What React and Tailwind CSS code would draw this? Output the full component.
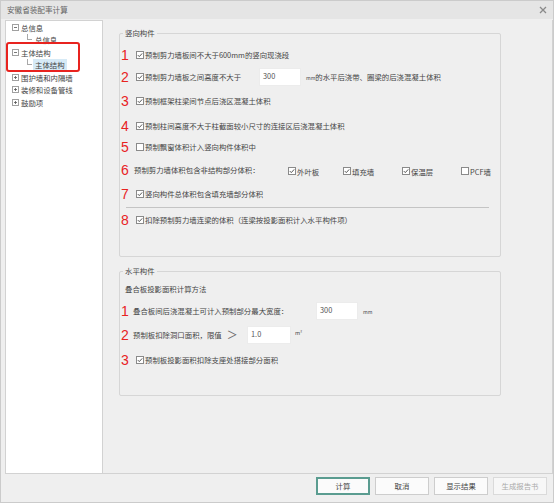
import React from 'react'

const FONT = { fontFamily: '"Noto Sans CJK SC", "Noto Sans", sans-serif' }

function Check({ on = true }) {
  return (
    <svg width="8" height="8" viewBox="0 0 8 8" className="shrink-0">
      <rect x="0.5" y="0.5" width="7" height="7" fill="#fff" stroke="#8a8a8a" />
      {on && <path d="M1.8 4.1 L3.3 5.6 L6.2 2.4" fill="none" stroke="#444" strokeWidth="0.9" />}
    </svg>
  )
}

function Num({ n, w = 'w-[16px]' }) {
  return (
    <span className={`${w} shrink-0 pl-[1px] text-[14px] leading-none text-[#e8231f]`} style={{ fontFamily: '"Liberation Sans", sans-serif' }}>
      {n}
    </span>
  )
}

function Expander({ open }) {
  return (
    <svg width="7" height="7" viewBox="0 0 7 7" className="shrink-0">
      <rect x="0.5" y="0.5" width="6" height="6" fill="#fff" stroke="#a0a0a0" />
      <path d="M2 3.5 H5" stroke="#555" strokeWidth="0.8" />
      {!open && <path d="M3.5 2 V5" stroke="#555" strokeWidth="0.8" />}
    </svg>
  )
}

function TreeParent({ label, open }) {
  return (
    <div className="h-[12.5px] flex items-center pl-[6px] gap-[2px]">
      <Expander open={open} />
      <span>{label}</span>
    </div>
  )
}

function TreeChild({ label, selected }) {
  return (
    <div className="h-[12.5px] flex items-start pl-[21px]">
      <span className="w-[5px] h-[6.5px] border-l border-b border-[#a8a8a8] shrink-0" />
      <span className={`ml-[1px] h-[12px] px-[2px] flex items-center ${selected ? 'bg-[#d6eaf6]' : ''}`}>{label}</span>
    </div>
  )
}

function Group({ title, h, children, className = '' }) {
  return (
    <div className={`relative w-[382px] ${h} border border-[#d6d6d6] rounded-[2px] ${className}`}>
      <span className="absolute -top-[6px] left-[3px] px-[2px] bg-[#efefef] leading-[10px]">{title}</span>
      {children}
    </div>
  )
}

function Field({ value, w }) {
  return (
    <div className={`${w} h-[18px] bg-white border border-[#ececec] pl-[3px] pt-[1px] leading-[12px] text-[#555] shrink-0`}>{value}</div>
  )
}

export default function App() {
  return (
    <div className="w-[554px] h-[503px] bg-[#efefef] border border-[#cbcbcb] flex flex-col text-[7.4px] text-[#454545] overflow-hidden" style={FONT}>
      {/* title bar */}
      <div className="h-[18px] shrink-0 bg-[#e5e5e5] flex items-center justify-between pl-[6px] pr-[6px]">
        <span className="text-[7.6px] text-[#666]">安徽省装配率计算</span>
        <svg width="8" height="8" viewBox="0 0 8 8">
          <path d="M1 1 L7 7 M7 1 L1 7" stroke="#8a8a8a" strokeWidth="1.3" />
        </svg>
      </div>

      {/* main area */}
      <div className="h-[455px] shrink-0 flex pl-[4px] pt-[1px]">
        <div className="relative w-[98px] bg-white border border-[#d2d2d2]">
          <TreeParent label="总信息" open />
          <TreeChild label="总信息" />
          <TreeParent label="主体结构" open />
          <TreeChild label="主体结构" selected />
          <TreeParent label="围护墙和内隔墙" />
          <TreeParent label="装修和设备管线" />
          <TreeParent label="鼓励项" />
          <div className="absolute left-[0px] top-[21px] w-[74px] h-[30px] border-2 border-[#e8231f] rounded-[3px]" />
        </div>

        <div className="flex-1 border-r border-b border-[#d2d2d2] pl-[16px] pt-[13px]">
          <Group title="竖向构件" h="h-[224px]">
            <div className="flex flex-col pt-[11px]">
              <div className="h-[20px] flex items-center">
                <Num n="1" />
                <Check />
                <span className="ml-[1px]">预制剪力墙板间不大于600mm的竖向现浇段</span>
              </div>
              <div className="h-[20px] mt-[2px] flex items-center">
                <Num n="2" />
                <Check />
                <span className="ml-[1px] w-[114px]">预制剪力墙板之间高度不大于</span>
                <Field value="300" w="w-[42px]" />
                <span className="ml-[5px]"><span className="text-[5px]">mm</span>的水平后浇带、圈梁的后浇混凝土体积</span>
              </div>
              <div className="h-[20px] mt-[4px] flex items-center">
                <Num n="3" />
                <Check />
                <span className="ml-[1px]">预制框架柱梁间节点后浇区混凝土体积</span>
              </div>
              <div className="h-[20px] mt-[5px] flex items-center">
                <Num n="4" />
                <Check />
                <span className="ml-[1px]">预制柱间高度不大于柱截面较小尺寸的连接区后浇混凝土体积</span>
              </div>
              <div className="h-[20px] mt-[1px] flex items-center">
                <Num n="5" />
                <Check on={false} />
                <span className="ml-[1px]">预制飘窗体积计入竖向构件体积中</span>
              </div>
              <div className="h-[20px] mt-[3px] flex items-center">
                <Num n="6" w="w-[14px]" />
                <span className="w-[154px]">预制剪力墙体积包含非结构部分体积：</span>
                <div className="w-[55px] flex items-center gap-[1px] mt-[3px]"><Check /><span>外叶板</span></div>
                <div className="w-[59px] flex items-center gap-[1px] mt-[3px]"><Check /><span>填充墙</span></div>
                <div className="w-[59px] flex items-center gap-[1px] mt-[3px]"><Check /><span>保温层</span></div>
                <div className="flex items-center gap-[1px] mt-[3px]"><Check on={false} /><span>PCF墙</span></div>
              </div>
              <div className="h-[20px] mt-[4px] flex items-center">
                <Num n="7" />
                <Check />
                <span className="ml-[1px]">竖向构件总体积包含填充墙部分体积</span>
              </div>
              <div className="ml-[6px] w-[363px] h-px bg-[#c4c4c4] mt-[3px]" />
              <div className="h-[20px] mt-[2px] flex items-center">
                <Num n="8" />
                <Check />
                <span className="ml-[1px]">扣除预制剪力墙连梁的体积（连梁按投影面积计入水平构件项）</span>
              </div>
            </div>
          </Group>

          <Group title="水平构件" h="h-[125px]" className="mt-[14px]">
            <div className="flex flex-col pt-[7px]">
              <div className="h-[20px] flex items-center pl-[5px]">叠合板投影面积计算方法</div>
              <div className="h-[20px] mt-[2px] flex items-center">
                <Num n="1" w="w-[13px]" />
                <span className="w-[183px]">叠合板间后浇混凝土可计入预制部分最大宽度：</span>
                <Field value="300" w="w-[42px]" />
                <span className="ml-[5px] text-[5px] mt-[2px]">mm</span>
              </div>
              <div className="h-[20px] mt-[4px] flex items-center">
                <Num n="2" w="w-[13px]" />
                <span className="w-[114px] flex items-center">
                  预制板扣除洞口面积，限值
                  <span className="ml-[5px] text-[11px] leading-none text-[#666]">＞</span>
                </span>
                <Field value="1.0" w="w-[44px]" />
                <span className="ml-[4px] text-[5.5px] -mt-[3px]">m²</span>
              </div>
              <div className="h-[20px] mt-[5px] flex items-center">
                <Num n="3" />
                <Check />
                <span className="ml-[1px]">预制板投影面积扣除支座处搭接部分面积</span>
              </div>
            </div>
          </Group>
        </div>
      </div>

      {/* buttons */}
      <div className="flex-1 flex justify-end items-start pt-[3px] pr-[6px] gap-[5px]">
        <button className="w-[54px] h-[18px] bg-[#fbfbfb] border-2 border-[#5a9c90] text-[#444]">计算</button>
        <button className="w-[54px] h-[18px] bg-[#fbfbfb] border border-[#cdcdcd] text-[#444]">取消</button>
        <button className="w-[54px] h-[18px] bg-[#fbfbfb] border border-[#cdcdcd] text-[#444]">显示结果</button>
        <button className="w-[54px] h-[18px] bg-[#f7f7f7] border border-[#dadada] text-[#aaa]">生成报告书</button>
      </div>
    </div>
  )
}
